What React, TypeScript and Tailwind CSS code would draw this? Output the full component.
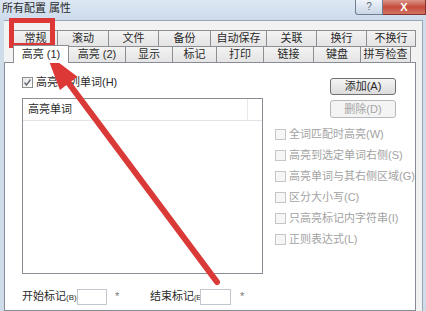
import React from "react";

const row1 = [
  { label: "常规", w: "w-[45px]" },
  { label: "滚动", w: "w-[52px]" },
  { label: "文件", w: "w-[51px]" },
  { label: "备份", w: "w-[53px]" },
  { label: "自动保存", w: "w-[57px]" },
  { label: "关联", w: "w-[51px]" },
  { label: "换行", w: "w-[51px]" },
  { label: "不换行", w: "w-[50px]" },
];

const row2 = [
  { label: "高亮 (1)", w: "w-[56px]", active: true },
  { label: "高亮 (2)", w: "w-[58px]" },
  { label: "显示", w: "w-[48px]" },
  { label: "标记", w: "w-[45px]" },
  { label: "打印", w: "w-[48px]" },
  { label: "链接", w: "w-[51px]" },
  { label: "键盘", w: "w-[48px]" },
  { label: "拼写检查", w: "w-[51px]" },
];

const options = [
  "全词匹配时高亮(W)",
  "高亮到选定单词右侧(S)",
  "高亮单词与其右侧区域(G)",
  "区分大小写(C)",
  "只高亮标记内字符串(I)",
  "正则表达式(L)",
];

function Tab({ label, w, active }: { label: string; w: string; active?: boolean }) {
  return (
    <div
      className={`${w} -ml-px first:ml-0 flex items-center justify-center border border-[#8c8e94] text-[11px] leading-none ${
        active
          ? "relative z-10 h-[18px] -mt-px border-b-0 bg-white"
          : "h-[17px] bg-linear-to-b from-[#f3f3f3] to-[#e4e4e4]"
      }`}
    >
      {label}
    </div>
  );
}

function Box({ checked, disabled }: { checked?: boolean; disabled?: boolean }) {
  return (
    <div
      className={`w-[11px] h-[11px] shrink-0 border flex items-center justify-center ${
        disabled ? "border-[#c6c6c6] bg-[#f6f6f6]" : "border-[#8e8f8f] bg-linear-to-br from-[#e6e6e6] to-white"
      }`}
    >
      {checked && (
        <svg width="9" height="9" viewBox="0 0 9 9">
          <polyline points="1.5,4.5 3.5,7 7.5,1.5" fill="none" stroke="#6a6f7a" strokeWidth="1.4" />
        </svg>
      )}
    </div>
  );
}

export default function App() {
  return (
    <div className="relative w-[426px] h-[311px] overflow-hidden flex flex-col bg-[#cfdcea] text-[#2a2a2a] font-['Liberation_Sans','Noto_Sans_CJK_SC',sans-serif]">
      {/* 标题栏 */}
      <div className="h-[20px] shrink-0 flex items-start justify-between bg-linear-to-b from-[#dde8f4] to-[#cddbeb]">
        <span className="pl-[2px] pt-[3px] text-[11px] leading-none">所有配置 属性</span>
        <div className="flex">
          <div className="w-[28px] h-[15px] border border-t-0 border-[#6f7e90] rounded-bl-[3px] bg-linear-to-b from-[#eef3f9] to-[#c9d6e6] flex items-center justify-center text-[10px] leading-none text-[#5a6674]">
            ?
          </div>
          <div className="w-[43px] h-[15px] border border-t-0 border-l-0 border-[#80342c] bg-linear-to-b from-[#dc958a] via-[#c54a3c] to-[#d27464] flex items-center justify-center text-[11px] font-bold leading-none text-white">
            X
          </div>
        </div>
      </div>

      {/* 客户区 */}
      <div className="flex-1 ml-[4px] mr-[3px] border-t border-r border-[#98a6b6] bg-[#f2f2f2] pt-[9px] flex flex-col">
        <div className="flex ml-[9px]">
          {row1.map((t) => (
            <Tab key={t.label} {...t} />
          ))}
        </div>
        <div className="flex items-start ml-[9px] -mt-px">
          {row2.map((t) => (
            <Tab key={t.label} {...t} />
          ))}
        </div>

        {/* 面板 */}
        <div className="w-[412px] flex-1 -mt-px border border-[#898c95] bg-white pl-[17px] pt-[14px]">
          <div className="flex">
            <div className="w-[241px] flex flex-col">
              <div className="h-[11px] flex items-center gap-[3px] text-[11px] leading-none">
                <Box checked />
                <span>高亮下列单词(H)</span>
              </div>
              <div className="mt-[10px] h-[176px] border border-[#8a8d94]">
                <div className="h-[22px] flex border-b border-[#e2e3e5]">
                  <div className="w-[225px] border-r border-[#e8e8e8] pl-[5px] flex items-center text-[11px] leading-none">
                    高亮单词
                  </div>
                </div>
              </div>
            </div>

            <div className="ml-[12px] flex-1 flex flex-col">
              <div className="ml-[55px] mt-px flex flex-col">
                <div className="w-[66px] h-[17px] border border-[#707070] rounded-[3px] bg-linear-to-b from-[#f4f4f4] to-[#dcdcdc] flex items-center justify-center text-[11px] leading-none">
                  添加(A)
                </div>
                <div className="mt-[5px] w-[66px] h-[18px] border border-[#b5b9bd] rounded-[3px] bg-[#f4f4f4] flex items-center justify-center text-[11px] leading-none text-[#a4a4a4]">
                  删除(D)
                </div>
              </div>
              <div className="mt-[6px] flex flex-col">
                {options.map((o) => (
                  <div key={o} className="h-[21px] flex items-center gap-[3px] text-[11px] leading-none text-[#a3a3a3]">
                    <Box disabled />
                    <span className="whitespace-nowrap">{o}</span>
                  </div>
                ))}
              </div>
            </div>
          </div>

          {/* 开始/结束标记 */}
          <div className="mt-[14px] h-[17px] flex items-center text-[11px] leading-none">
            <span className="w-[55px] whitespace-nowrap">
              开始标记<span className="text-[8px]">(B)</span>
            </span>
            <div className="w-[30px] h-[16px] border border-[#c3c6cc] bg-white" />
            <span className="w-[43px] pl-[8px] text-[#777]">*</span>
            <span className="w-[50px] whitespace-nowrap">
              结束标记<span className="text-[7px]">(E)</span>
            </span>
            <div className="w-[31px] h-[16px] border border-[#c3c6cc] bg-white" />
            <span className="pl-[9px] text-[#777]">*</span>
          </div>
        </div>
      </div>

      {/* 红色标注 */}
      <svg className="absolute inset-0 pointer-events-none" width="426" height="311" viewBox="0 0 426 311">
        <rect x="11.5" y="20.5" width="41" height="25" fill="none" stroke="#dd3835" strokeWidth="5" />
        <line x1="67" y1="81" x2="217" y2="282" stroke="#d93a37" strokeWidth="6" strokeLinecap="round" />
        <polygon points="46,53 59.9,90 77.5,76.8" fill="#dd3835" />
      </svg>
    </div>
  );
}
